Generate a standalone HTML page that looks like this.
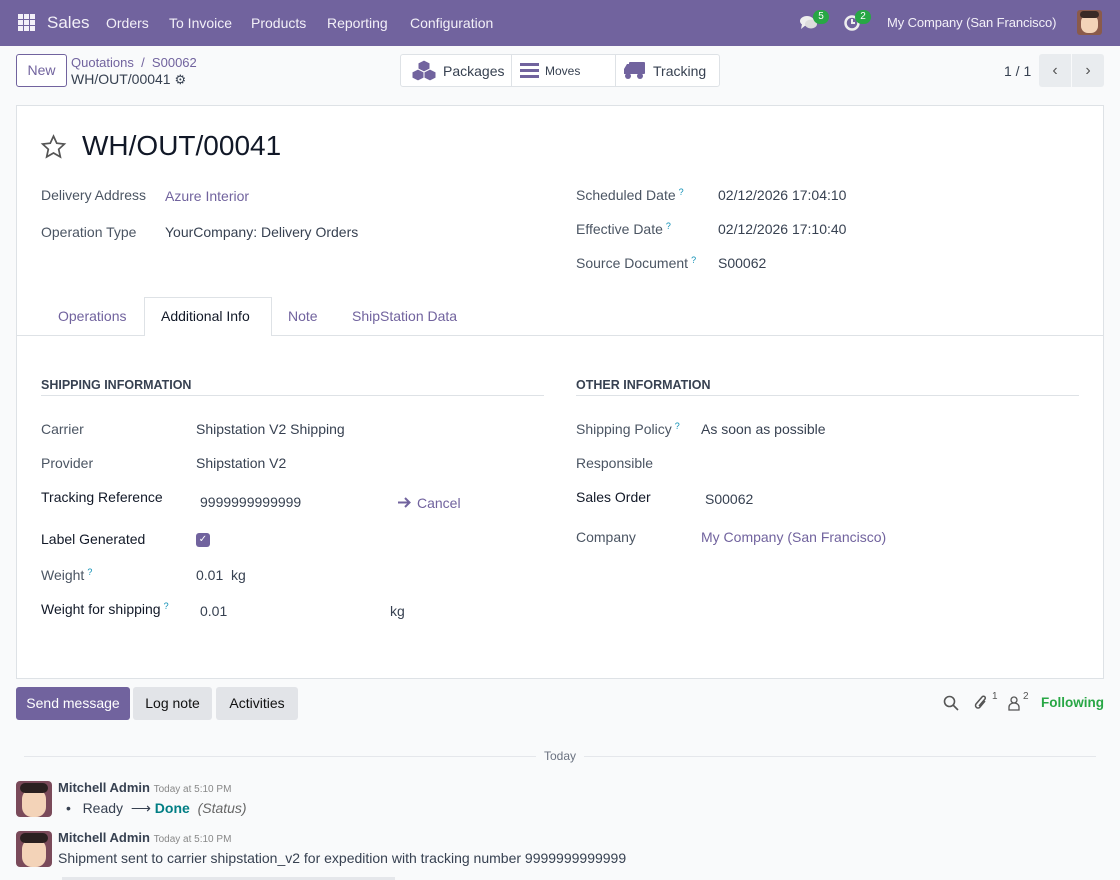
<!DOCTYPE html>
<html><head><meta charset="utf-8"><style>
*{box-sizing:border-box;margin:0;padding:0}
body{width:1120px;height:880px;overflow:hidden;background:#f9fafb;font-family:"Liberation Sans",sans-serif;font-size:14px;color:#374151;position:relative}
.a{position:absolute;white-space:nowrap}
.nav{position:absolute;left:0;top:0;width:1120px;height:46px;background:#71639e;color:#fff}
.nav .a{top:15px;font-size:14px;color:#f3f0f8}
.lnk{color:#71639e}
.lbl{color:#4b5563}
.b{color:#111827}
.q{color:#0e8fb5;font-size:9px;vertical-align:top;margin-left:3px}
.sheet{position:absolute;left:16px;top:105px;width:1088px;height:574px;background:#fff;border:1px solid #dee2e6}
.btn{position:absolute;height:33px;border-radius:3px;font-size:14px;text-align:center;line-height:33px}
</style></head><body>
<div class="nav">
  <svg class="a" style="left:18px;top:14px" width="17" height="17" viewBox="0 0 17 17" fill="#f3f0f8"><rect x="0" y="0" width="5" height="5"/><rect x="6" y="0" width="5" height="5"/><rect x="12" y="0" width="5" height="5"/><rect x="0" y="6" width="5" height="5"/><rect x="6" y="6" width="5" height="5"/><rect x="12" y="6" width="5" height="5"/><rect x="0" y="12" width="5" height="5"/><rect x="6" y="12" width="5" height="5"/><rect x="12" y="12" width="5" height="5"/></svg>
  <div class="a" style="left:47px;top:13px;font-size:17px">Sales</div>
  <div class="a" style="left:106px">Orders</div>
  <div class="a" style="left:169px">To Invoice</div>
  <div class="a" style="left:251px">Products</div>
  <div class="a" style="left:327px">Reporting</div>
  <div class="a" style="left:410px">Configuration</div>
  <svg class="a" style="left:800px;top:15px" width="18" height="16" viewBox="0 0 18 16" fill="#eee"><ellipse cx="7" cy="6" rx="7" ry="5"/><path d="M2 9 L1 14 L6 10z"/><ellipse cx="11" cy="9" rx="6" ry="4.5" fill="#ddd"/></svg>
  <div class="a" style="left:813px;top:10px;width:16px;height:14px;border-radius:7px;background:#28a745;color:#fff;font-size:10px;text-align:center;line-height:14px">5</div>
  <svg class="a" style="left:843px;top:14px" width="18" height="18" viewBox="0 0 18 18"><circle cx="9" cy="9" r="6.5" fill="none" stroke="#eee" stroke-width="2.5"/><path d="M9 5v4h3" stroke="#eee" stroke-width="2" fill="none"/></svg>
  <div class="a" style="left:855px;top:10px;width:16px;height:14px;border-radius:7px;background:#28a745;color:#fff;font-size:10px;text-align:center;line-height:14px">2</div>
  <div class="a" style="left:887px;font-size:13px;letter-spacing:-0.1px">My Company (San Francisco)</div>
  <div class="a" style="left:1077px;top:10px;width:25px;height:25px;border-radius:3px;background:#8a5a4a;overflow:hidden"><div style="position:absolute;left:4px;top:5px;width:17px;height:18px;border-radius:7px;background:#f3d3b8"></div><div style="position:absolute;left:3px;top:1px;width:19px;height:7px;border-radius:4px;background:#3a2a26"></div></div>
</div>

<div class="btn" style="left:16px;top:54px;width:51px;border:1px solid #71639e;color:#71639e;background:#fff;height:33px;line-height:31px">New</div>
<div class="a lnk" style="left:71px;top:55px;font-size:13px">Quotations&nbsp;&nbsp;/&nbsp;&nbsp;S00062</div>
<div class="a" style="left:71px;top:71px;font-size:14px;color:#374151">WH/OUT/00041 <span style="font-size:13px">⚙</span></div>

<div class="a" style="left:400px;top:54px;width:320px;height:33px;border:1px solid #dee2e6;border-radius:3px;background:#fff"></div>
<div class="a" style="left:511px;top:55px;width:1px;height:31px;background:#dee2e6"></div>
<div class="a" style="left:615px;top:55px;width:1px;height:31px;background:#dee2e6"></div>
<svg class="a" style="left:411px;top:59px" width="26" height="23" viewBox="0 0 26 23" fill="#71639e" stroke="#fff" stroke-width="1"><path d="M13 1l6 3v6l-6 3-6-3V4z"/><path d="M7 10l6 3v6l-6 3-6-3v-6z"/><path d="M19 10l6 3v6l-6 3-6-3v-6z"/></svg>
<div class="a" style="left:443px;top:63px;color:#374151">Packages</div>
<svg class="a" style="left:520px;top:63px" width="19" height="15" viewBox="0 0 19 15" fill="#71639e"><rect y="0" width="19" height="3"/><rect y="6" width="19" height="3"/><rect y="12" width="19" height="3"/></svg>
<div class="a" style="left:545px;top:64px;font-size:12px;color:#374151">Moves</div>
<svg class="a" style="left:623px;top:61px" width="22" height="19" viewBox="0 0 22 19" fill="#71639e"><rect x="6" y="1" width="16" height="12" rx="1"/><path d="M1 8l3-5h3v10H1z"/><circle cx="5" cy="15" r="3"/><circle cx="17" cy="15" r="3"/></svg>
<div class="a" style="left:653px;top:63px;color:#374151">Tracking</div>

<div class="a" style="left:1004px;top:63px;color:#374151">1 / 1</div>
<div class="a" style="left:1039px;top:54px;width:32px;height:33px;background:#e9ecef;border-radius:3px 0 0 3px;text-align:center;line-height:33px;color:#555;font-size:16px">‹</div>
<div class="a" style="left:1072px;top:54px;width:32px;height:33px;background:#e9ecef;border-radius:0 3px 3px 0;text-align:center;line-height:33px;color:#555;font-size:16px">›</div>

<div class="sheet"></div>
<svg class="a" style="left:40px;top:134px" width="27" height="26" viewBox="0 0 24 24" fill="none" stroke="#555" stroke-width="1.6"><path d="M12 2l3 6.5 7 .8-5.2 4.8 1.5 7L12 17.5 5.7 21.1l1.5-7L2 9.3l7-.8z"/></svg>
<div class="a" style="left:82px;top:130px;font-size:28px;color:#111827">WH/OUT/00041</div>

<div class="a lbl" style="left:41px;top:187px">Delivery Address</div>
<div class="a lnk" style="left:165px;top:188px">Azure Interior</div>
<div class="a lbl" style="left:41px;top:224px">Operation Type</div>
<div class="a b" style="left:165px;top:224px;color:#374151">YourCompany: Delivery Orders</div>
<div class="a lbl" style="left:576px;top:187px">Scheduled Date<span class="q">?</span></div>
<div class="a" style="left:718px;top:187px">02/12/2026 17:04:10</div>
<div class="a lbl" style="left:576px;top:221px">Effective Date<span class="q">?</span></div>
<div class="a" style="left:718px;top:221px">02/12/2026 17:10:40</div>
<div class="a lbl" style="left:576px;top:255px">Source Document<span class="q">?</span></div>
<div class="a" style="left:718px;top:255px">S00062</div>

<div class="a" style="left:17px;top:335px;width:1086px;height:1px;background:#dee2e6"></div>
<div class="a" style="left:144px;top:297px;width:128px;height:39px;background:#fff;border:1px solid #dee2e6;border-bottom:none"></div>
<div class="a lnk" style="left:58px;top:308px">Operations</div>
<div class="a b" style="left:161px;top:308px">Additional Info</div>
<div class="a lnk" style="left:288px;top:308px">Note</div>
<div class="a lnk" style="left:352px;top:308px">ShipStation Data</div>

<div class="a b" style="left:41px;top:378px;font-size:12.5px;font-weight:bold;color:#374151">SHIPPING INFORMATION</div>
<div class="a" style="left:41px;top:395px;width:503px;height:1px;background:#dee2e6"></div>
<div class="a b" style="left:576px;top:378px;font-size:12.5px;font-weight:bold;color:#374151">OTHER INFORMATION</div>
<div class="a" style="left:576px;top:395px;width:503px;height:1px;background:#dee2e6"></div>

<div class="a lbl" style="left:41px;top:421px">Carrier</div>
<div class="a" style="left:196px;top:421px">Shipstation V2 Shipping</div>
<div class="a lbl" style="left:41px;top:455px">Provider</div>
<div class="a" style="left:196px;top:455px">Shipstation V2</div>
<div class="a b" style="left:41px;top:489px">Tracking Reference</div>
<div class="a" style="left:200px;top:494px">9999999999999</div>
<svg class="a" style="left:398px;top:497px" width="13" height="11" viewBox="0 0 13 11" fill="none" stroke="#71639e" stroke-width="2"><path d="M0 5.5h11M7 1l4.5 4.5L7 10"/></svg>
<div class="a lnk" style="left:417px;top:495px">Cancel</div>
<div class="a b" style="left:41px;top:531px">Label Generated</div>
<div class="a" style="left:196px;top:533px;width:14px;height:14px;border-radius:3px;background:#71639e;color:#fff;font-size:10px;text-align:center;line-height:14px">✓</div>
<div class="a lbl" style="left:41px;top:567px">Weight<span class="q">?</span></div>
<div class="a" style="left:196px;top:567px">0.01&nbsp; kg</div>
<div class="a b" style="left:41px;top:601px">Weight for shipping<span class="q">?</span></div>
<div class="a" style="left:200px;top:603px">0.01</div>
<div class="a" style="left:390px;top:603px">kg</div>

<div class="a lbl" style="left:576px;top:421px">Shipping Policy<span class="q">?</span></div>
<div class="a" style="left:701px;top:421px">As soon as possible</div>
<div class="a lbl" style="left:576px;top:455px">Responsible</div>
<div class="a b" style="left:576px;top:489px">Sales Order</div>
<div class="a" style="left:705px;top:491px">S00062</div>
<div class="a lbl" style="left:576px;top:529px">Company</div>
<div class="a lnk" style="left:701px;top:529px">My Company (San Francisco)</div>

<div class="btn" style="left:16px;top:687px;width:114px;background:#71639e;color:#fff">Send message</div>
<div class="btn" style="left:133px;top:687px;width:79px;background:#e2e4e8;color:#111">Log note</div>
<div class="btn" style="left:216px;top:687px;width:82px;background:#e2e4e8;color:#111">Activities</div>
<svg class="a" style="left:943px;top:695px" width="16" height="16" viewBox="0 0 16 16" fill="none" stroke="#555" stroke-width="1.6"><circle cx="6.5" cy="6.5" r="5"/><path d="M10 10l5 5"/></svg>
<svg class="a" style="left:973px;top:694px" width="16" height="18" viewBox="0 0 16 18" fill="none" stroke="#555" stroke-width="1.5"><path d="M12 7l-5 6a2.5 2.5 0 0 1-4-3l6-7a1.7 1.7 0 0 1 3 2l-6 7"/></svg>
<div class="a" style="left:992px;top:691px;color:#555;font-size:10px">1</div>
<svg class="a" style="left:1008px;top:696px" width="12" height="15" viewBox="0 0 12 15" fill="none" stroke="#555" stroke-width="1.3"><circle cx="6" cy="4" r="3"/><path d="M1 14v-3a5 4 0 0 1 10 0v3z"/></svg>
<div class="a" style="left:1023px;top:691px;color:#555;font-size:10px">2</div>
<div class="a" style="left:1041px;top:695px;color:#28a745;font-weight:bold;font-size:13.5px">Following</div>

<div class="a" style="left:24px;top:756px;width:512px;height:1px;background:#e5e7eb"></div>
<div class="a" style="left:584px;top:756px;width:512px;height:1px;background:#e5e7eb"></div>
<div class="a" style="left:544px;top:749px;font-size:12px;color:#6b7280">Today</div>

<div class="a" style="left:16px;top:781px;width:36px;height:36px;border-radius:4px;background:#7a4a5a;overflow:hidden"><div style="position:absolute;left:6px;top:8px;width:24px;height:28px;border-radius:10px;background:#f3d3b8"></div><div style="position:absolute;left:4px;top:2px;width:28px;height:10px;border-radius:5px;background:#2a2020"></div></div>
<div class="a" style="left:58px;top:780px;font-weight:bold;font-size:13px">Mitchell Admin <span style="font-weight:normal;font-size:10px;color:#888">Today at 5:10 PM</span></div>
<div class="a" style="left:66px;top:800px">•&nbsp;&nbsp; Ready &nbsp;<span>⟶</span> <span style="color:#017e84;font-weight:bold">Done</span> &nbsp;<i style="color:#666">(Status)</i></div>
<div class="a" style="left:16px;top:831px;width:36px;height:36px;border-radius:4px;background:#7a4a5a;overflow:hidden"><div style="position:absolute;left:6px;top:8px;width:24px;height:28px;border-radius:10px;background:#f3d3b8"></div><div style="position:absolute;left:4px;top:2px;width:28px;height:10px;border-radius:5px;background:#2a2020"></div></div>
<div class="a" style="left:58px;top:830px;font-weight:bold;font-size:13px">Mitchell Admin <span style="font-weight:normal;font-size:10px;color:#888">Today at 5:10 PM</span></div>
<div class="a" style="left:58px;top:850px">Shipment sent to carrier shipstation_v2 for expedition with tracking number 9999999999999</div>
<div class="a" style="left:62px;top:877px;width:333px;height:3px;background:#e5e7eb"></div>
</body></html>
